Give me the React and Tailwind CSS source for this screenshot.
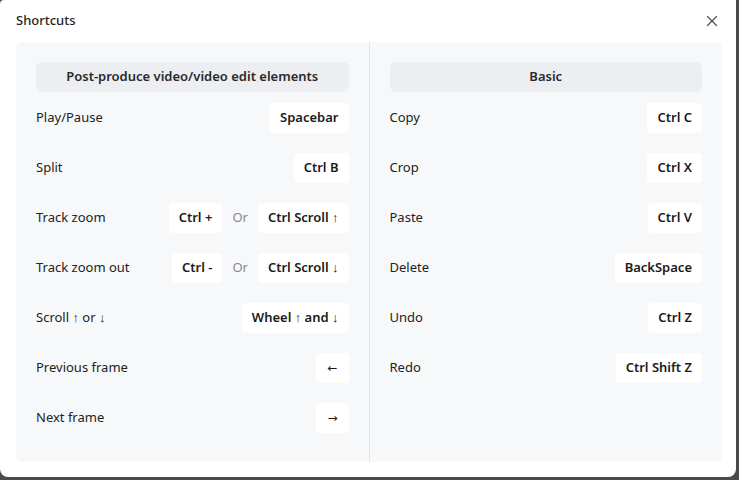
import { X } from "lucide-react";

const left = [
  { label: "Play/Pause", keys: ["Spacebar"] },
  { label: "Split", keys: ["Ctrl B"] },
  { label: "Track zoom", keys: ["Ctrl +", "Ctrl Scroll ↑"] },
  { label: "Track zoom out", keys: ["Ctrl -", "Ctrl Scroll ↓"] },
  { label: "Scroll ↑ or ↓", keys: ["Wheel ↑ and ↓"] },
  { label: "Previous frame", keys: ["←"], arrow: true },
  { label: "Next frame", keys: ["→"], arrow: true },
];

const right = [
  { label: "Copy", keys: ["Ctrl C"] },
  { label: "Crop", keys: ["Ctrl X"] },
  { label: "Paste", keys: ["Ctrl V"] },
  { label: "Delete", keys: ["BackSpace"] },
  { label: "Undo", keys: ["Ctrl Z"] },
  { label: "Redo", keys: ["Ctrl Shift Z"] },
];

function Key({ children, arrow }) {
  return (
    <span
      className={
        "h-[30px] flex items-center bg-white rounded-[4px] text-[#1a1a1a] " +
        (arrow ? "px-[11px] font-normal text-[12px] font-['DejaVu_Sans',sans-serif]" : "px-[10px] font-semibold")
      }
    >
      {children}
    </span>
  );
}

function Row({ item }) {
  return (
    <div className="h-[30px] flex items-center justify-between">
      <span className="text-[#222]">{item.label}</span>
      <div className="flex items-center">
        {item.keys.map((k, i) => (
          <div key={k} className="flex items-center">
            {i > 0 && <span className="px-[10px] text-[#8a8a8a]">Or</span>}
            <Key arrow={item.arrow}>{k}</Key>
          </div>
        ))}
      </div>
    </div>
  );
}

function Column({ title, items }) {
  return (
    <div className="flex-1 px-5 pt-5 flex flex-col">
      <div className="h-[30px] flex items-center justify-center bg-[#eceef1] rounded-[6px] font-semibold text-[#2a2a2a]">
        {title}
      </div>
      <div className="mt-[11px] flex flex-col gap-5">
        {items.map((it) => (
          <Row key={it.label} item={it} />
        ))}
      </div>
    </div>
  );
}

export default function App() {
  return (
    <div
      className="w-[739px] h-[480px] bg-[#4a4a4a] overflow-hidden text-[13px]"
      style={{ fontFamily: '"Noto Sans", "Open Sans", sans-serif' }}
    >
      <div className="w-[736px] h-[477px] bg-white rounded-b-[8px] rounded-tl-[4px] flex flex-col">
        <div className="h-[42px] flex items-center justify-between pl-4 pr-[15px]">
          <span className="font-medium text-[#1f1f1f]">Shortcuts</span>
          <X size={18} strokeWidth={1.6} className="text-[#555]" />
        </div>
        <div className="mx-4 w-[706px] h-[420px] bg-[#f7f8fa] rounded-[6px] flex">
          <Column title="Post-produce video/video edit elements" items={left} />
          <div className="w-px bg-[#e3e5e8]" />
          <Column title="Basic" items={right} />
        </div>
      </div>
    </div>
  );
}
